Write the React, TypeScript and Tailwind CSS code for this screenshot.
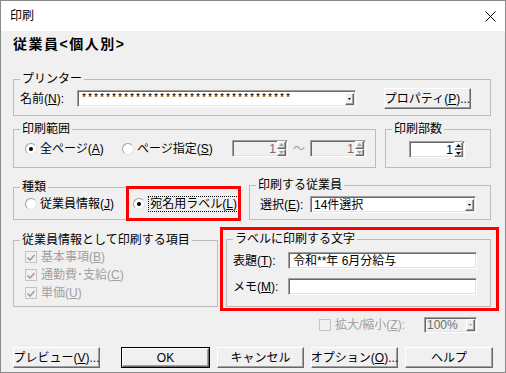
import React from "react";

const sunken =
  "border border-t-[#a0a0a0] border-l-[#a0a0a0] border-b-white border-r-white shadow-[inset_1px_1px_0_#696969,inset_-1px_-1px_0_#e3e3e3]";
const raised =
  "border border-t-white border-l-white border-b-[#696969] border-r-[#696969] shadow-[inset_-1px_-1px_0_#a0a0a0] bg-[#f0f0f0]";

const U = ({ c }: { c: string }) => (
  <span className="underline underline-offset-[1px]">{c}</span>
);

const Group = ({
  title,
  className = "",
  children,
}: {
  title: string;
  className?: string;
  children?: React.ReactNode;
}) => (
  <fieldset className={`border border-[#bcbcbc] min-w-0 ${className}`}>
    <legend className="ml-[6px] px-[2px] leading-[14px]">{title}</legend>
    {children}
  </fieldset>
);

const Arrow = ({ up, gray }: { up?: boolean; gray?: boolean }) => (
  <svg width="5" height="3" viewBox="0 0 5 3">
    <path
      d={up ? "M2.5 0 L5 3 L0 3 Z" : "M0 0 L5 0 L2.5 3 Z"}
      fill={gray ? "#a0a0a0" : "#000"}
    />
  </svg>
);

const DropBtn = ({ gray }: { gray?: boolean }) => (
  <div className={`w-[9px] h-[12px] mr-[1px] shrink-0 flex items-center justify-center ${raised}`}>
    <svg width="3" height="2" viewBox="0 0 3 2">
      <path d="M0 0 L3 0 L1.5 2 Z" fill={gray ? "#a0a0a0" : "#000"} />
    </svg>
  </div>
);

const Spin = ({ disabled }: { disabled?: boolean }) => (
  <div
    className={`flex items-center w-[56px] h-[17px] ${sunken} ${
      disabled ? "bg-[#f0f0f0] text-[#6d6d6d]" : "bg-white"
    }`}
  >
    <span className="flex-1 text-right pr-[1px]">1</span>
    <div className="flex flex-col w-[9px] h-[15px] mr-[1px]">
      <div className={`flex-1 flex items-center justify-center ${raised}`}>
        <Arrow up gray={disabled} />
      </div>
      <div className={`flex-1 flex items-center justify-center ${raised}`}>
        <Arrow gray={disabled} />
      </div>
    </div>
  </div>
);

const Radio = ({ checked, children }: { checked?: boolean; children?: React.ReactNode }) => (
  <div className="flex items-center gap-[3px]">
    <span className="w-[12px] h-[12px] rounded-full bg-white border border-t-[#a0a0a0] border-l-[#a0a0a0] border-b-[#e3e3e3] border-r-[#e3e3e3] flex items-center justify-center shrink-0">
      {checked && <span className="w-[4px] h-[4px] rounded-full bg-black" />}
    </span>
    <span>{children}</span>
  </div>
);

const Check = ({ checked, children }: { checked?: boolean; children?: React.ReactNode }) => (
  <div className="flex items-center gap-[4px] text-[#a0a0a0]">
    <span className="w-[12px] h-[12px] bg-[#f0f0f0] border border-[#c4c4c4] flex items-center justify-center shrink-0">
      {checked && (
        <svg width="8" height="7" viewBox="0 0 8 7">
          <path d="M0.5 3.5 L3 6 L7.5 1" fill="none" stroke="#a0a0a0" strokeWidth="1.6" />
        </svg>
      )}
    </span>
    <span>{children}</span>
  </div>
);

const Button = ({
  children,
  w,
  def,
}: {
  children: React.ReactNode;
  w: string;
  def?: boolean;
}) =>
  def ? (
    <div className={`${w} h-[21px] border border-black`}>
      <div className={`w-full h-full flex items-center justify-center ${raised}`}>
        <span>{children}</span>
      </div>
    </div>
  ) : (
    <div className={`${w} h-[21px] flex items-center justify-center ${raised}`}>
      <span>{children}</span>
    </div>
  );

export default function App() {
  return (
    <div className="w-[506px] h-[373px] border border-[#8a8a8a] bg-[#f0f0f0] text-[12px] leading-[14px] text-black whitespace-nowrap [text-autospace:no-autospace] font-['Liberation_Sans','Noto_Sans_CJK_JP',sans-serif] flex flex-col overflow-hidden">
      {/* title bar */}
      <div className="h-[30px] shrink-0 bg-white flex items-center justify-between pl-[9px] pr-[9px]">
        <span>印刷</span>
        <svg width="11" height="11" viewBox="0 0 11 11">
          <path d="M0.5 0.5 L10.5 10.5 M10.5 0.5 L0.5 10.5" stroke="#000" strokeWidth="1" />
        </svg>
      </div>

      <div className="pl-[12px] flex flex-col">
        <div className="mt-[5px] font-bold text-[14px] leading-[16px] tracking-[1.5px]">
          従業員&lt;個人別&gt;
        </div>

        {/* printer */}
        <Group title="プリンター" className="mt-[20px] w-[478px] h-[44px]">
          <div className="flex items-center mt-[2px] pl-[6px] h-[21px]">
            <span className="w-[57px]">
              名前(<U c="N" />):
            </span>
            <div className={`w-[279px] h-[17px] bg-white flex items-center ${sunken}`}>
              <span className="flex-1 pl-[3px] font-['Liberation_Mono',monospace] text-[10px] leading-[12px]">
                ***********************************
              </span>
              <DropBtn />
            </div>
            <div className="ml-[28px]">
              <Button w="w-[87px]">
                プロパティ(<U c="P" />)...
              </Button>
            </div>
          </div>
        </Group>

        {/* range / copies */}
        <div className="flex gap-[9px] mt-[6px]">
          <Group title="印刷範囲" className="w-[363px] h-[46px]">
            <div className="flex items-center mt-[4px] h-[17px] pl-[11px]">
              <div className="w-[97px]">
                <Radio checked>
                  全ページ(<U c="A" />)
                </Radio>
              </div>
              <div className="w-[110px]">
                <Radio>
                  ページ指定(<U c="S" />)
                </Radio>
              </div>
              <Spin disabled />
              <span className="w-[22px] text-center text-[#a0a0a0]">～</span>
              <Spin disabled />
            </div>
          </Group>
          <Group title="印刷部数" className="w-[106px] h-[46px]">
            <div className="mt-[5px] pl-[23px]">
              <Spin />
            </div>
          </Group>
        </div>

        {/* kind / employees */}
        <div className="flex items-end gap-[9px] mt-[10px]">
          <div className="relative">
            <Group title="種類" className="w-[227px] h-[40px]">
              <div className="flex items-center mt-[3px] h-[14px] pl-[11px]">
                <div className="w-[111px]">
                  <Radio>
                    従業員情報(<U c="J" />)
                  </Radio>
                </div>
                <Radio checked>
                  <span className="border border-dotted border-black px-[1px] leading-[13px]">
                    宛名用ラベル(<U c="L" />)
                  </span>
                </Radio>
              </div>
            </Group>
            <div className="absolute left-[113px] top-[6px] w-[115px] h-[35px] border-[3px] border-[#ff0000]" />
          </div>
          <Group title="印刷する従業員" className="w-[242px] h-[42px]">
            <div className="flex items-center mt-[4px] h-[17px] pl-[10px]">
              <span className="w-[50px]">
                選択(<U c="E" />):
              </span>
              <div className={`w-[166px] h-[17px] bg-white flex items-center ${sunken}`}>
                <span className="flex-1 pl-[3px]">14件選択</span>
                <DropBtn />
              </div>
            </div>
          </Group>
        </div>

        {/* items / label text */}
        <div className="flex items-start gap-[2px] mt-[7px]">
          <Group title="従業員情報として印刷する項目" className="mt-[6px] w-[205px] h-[74px]">
            <div className="flex flex-col mt-[1px] pl-[11px]">
              <div className="h-[18px] flex items-center">
                <Check checked>
                  基本事項(<U c="B" />)
                </Check>
              </div>
              <div className="h-[18px] flex items-center">
                <Check checked>
                  通勤費･支給(<U c="C" />)
                </Check>
              </div>
              <div className="h-[18px] flex items-center">
                <Check checked>
                  単価(<U c="U" />)
                </Check>
              </div>
            </div>
          </Group>
          <div className="w-[279px] h-[84px] border-[3px] border-[#ff0000]">
            <Group title="ラベルに印刷する文字" className="ml-[3px] mt-[2px] w-[265px] h-[75px]">
              <div className="flex items-center mt-[6px] h-[17px] pl-[6px]">
                <span className="w-[55px]">
                  表題(<U c="T" />):
                </span>
                <div className={`w-[189px] h-[17px] bg-white flex items-center pl-[4px] ${sunken}`}>
                  令和**年 6月分給与
                </div>
              </div>
              <div className="flex items-center mt-[9px] h-[17px] pl-[6px]">
                <span className="w-[55px]">
                  メモ(<U c="M" />):
                </span>
                <div className={`w-[189px] h-[17px] bg-white ${sunken}`} />
              </div>
            </Group>
          </div>
        </div>

        {/* zoom */}
        <div className="flex items-center h-[16px] mt-[6px] pl-[306px]">
          <div className="w-[105px]">
            <Check>
              拡大/縮小(<U c="Z" />):
            </Check>
          </div>
          <div className={`w-[53px] h-[16px] bg-[#f0f0f0] flex items-center text-[#6d6d6d] ${sunken}`}>
            <span className="flex-1 pl-[2px]">100%</span>
            <DropBtn gray />
          </div>
        </div>

        {/* buttons */}
        <div className="flex items-center mt-[14px]">
          <Button w="w-[87px]">
            プレビュー(<U c="V" />)...
          </Button>
          <div className="ml-[21px]">
            <Button w="w-[89px]" def>
              OK
            </Button>
          </div>
          <div className="ml-[7px]">
            <Button w="w-[87px]">キャンセル</Button>
          </div>
          <div className="ml-[7px]">
            <Button w="w-[87px]">
              オプション(<U c="O" />)...
            </Button>
          </div>
          <div className="ml-[7px]">
            <Button w="w-[88px]">ヘルプ</Button>
          </div>
        </div>
      </div>
    </div>
  );
}
